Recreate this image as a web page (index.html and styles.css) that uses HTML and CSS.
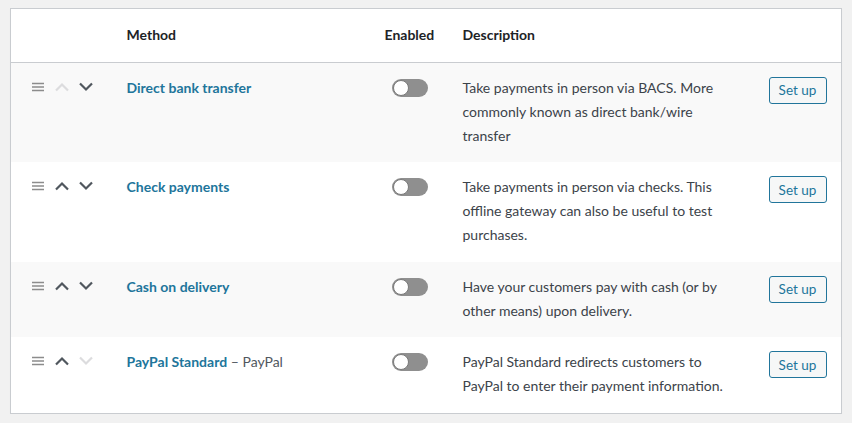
FILE: index.html
```html
<!DOCTYPE html>
<html>
<head>
<meta charset="utf-8">
<link rel="stylesheet" href="styles.css">
</head>
<body>
<div class="wrap">
<table class="methods">
  <colgroup>
    <col class="c-sort"><col class="c-name"><col class="c-en"><col class="c-desc"><col class="c-act">
  </colgroup>
  <thead>
    <tr><th></th><th>Method</th><th>Enabled</th><th>Description</th><th></th></tr>
  </thead>
  <tbody>
    <tr class="alt">
      <td class="sort"><svg class="ham" viewBox="0 0 12 10"><path d="M0 1.5h12M0 5h12M0 8.5h12"/></svg><svg class="chev off" viewBox="0 0 16 10"><path d="M2 8.5 8 2.5l6 6"/></svg><svg class="chev" viewBox="0 0 16 10"><path d="M2 1.5l6 6 6-6"/></svg></td>
      <td><a class="name" href="#">Direct bank transfer</a></td>
      <td><span class="toggle"></span></td>
      <td class="desc">Take payments in person via BACS. More commonly known as direct bank/wire transfer</td>
      <td><button class="setup">Set up</button></td>
    </tr>
    <tr>
      <td class="sort"><svg class="ham" viewBox="0 0 12 10"><path d="M0 1.5h12M0 5h12M0 8.5h12"/></svg><svg class="chev" viewBox="0 0 16 10"><path d="M2 8.5 8 2.5l6 6"/></svg><svg class="chev" viewBox="0 0 16 10"><path d="M2 1.5l6 6 6-6"/></svg></td>
      <td><a class="name" href="#">Check payments</a></td>
      <td><span class="toggle"></span></td>
      <td class="desc">Take payments in person via checks. This offline gateway can also be useful to test purchases.</td>
      <td><button class="setup">Set up</button></td>
    </tr>
    <tr class="alt">
      <td class="sort"><svg class="ham" viewBox="0 0 12 10"><path d="M0 1.5h12M0 5h12M0 8.5h12"/></svg><svg class="chev" viewBox="0 0 16 10"><path d="M2 8.5 8 2.5l6 6"/></svg><svg class="chev" viewBox="0 0 16 10"><path d="M2 1.5l6 6 6-6"/></svg></td>
      <td><a class="name" href="#">Cash on delivery</a></td>
      <td><span class="toggle"></span></td>
      <td class="desc">Have your customers pay with cash (or by other means) upon delivery.</td>
      <td><button class="setup">Set up</button></td>
    </tr>
    <tr>
      <td class="sort"><svg class="ham" viewBox="0 0 12 10"><path d="M0 1.5h12M0 5h12M0 8.5h12"/></svg><svg class="chev" viewBox="0 0 16 10"><path d="M2 8.5 8 2.5l6 6"/></svg><svg class="chev off" viewBox="0 0 16 10"><path d="M2 1.5l6 6 6-6"/></svg></td>
      <td><a class="name" href="#">PayPal Standard</a><span class="sub"> – PayPal</span></td>
      <td><span class="toggle"></span></td>
      <td class="desc">PayPal Standard redirects customers to PayPal to enter their payment information.</td>
      <td><button class="setup">Set up</button></td>
    </tr>
  </tbody>
</table>
</div>
</body>
</html>
```
FILE: styles.css
```css
html, body {
  margin: 0;
  padding: 0;
  background: #f1f1f1;
}
body {
  font-family: Lato, "Open Sans", sans-serif;
  font-size: 14px;
  color: #3c434a;
}
.wrap {
  padding: 8px 10px 0 10px;
}
.methods {
  width: 832px;
  border-collapse: collapse;
  table-layout: fixed;
  background: #fff;
  border: 1px solid #c9ccd0;
  box-shadow: 0 1px 1px rgba(0,0,0,0.04);
}
.c-sort { width: 101px; }
.c-name { width: 258px; }
.c-en { width: 78px; }
.c-desc { width: 306px; }
.c-act { width: 88px; }
th {
  text-align: left;
  font-weight: 700;
  color: #1d2327;
  padding: 14px 15px 15px 15px;
  line-height: 23.5px;
  border-bottom: 1px solid #c9ccd0;
}
td {
  vertical-align: top;
  padding: 13px 15px 14.5px 15px;
  line-height: 24px;
}
tr.alt td { background: #f9f9f9; }
td.sort {
  padding-left: 21px;
  padding-right: 0;
  white-space: nowrap;
}
.ham {
  width: 12px;
  height: 10px;
  vertical-align: middle;
  margin-right: 10px;
  position: relative;
  top: -2px;
}
.ham path {
  fill: none;
  stroke: #8c8c8c;
  stroke-width: 1.6;
}
.chev {
  width: 16px;
  height: 10px;
  vertical-align: middle;
  margin-right: 8px;
  position: relative;
  top: -2px;
}
.chev path {
  fill: none;
  stroke: #50575e;
  stroke-width: 2.2;
}
.chev.off path { stroke: #dcdcde; }
.name {
  color: #21759b;
  font-weight: 700;
  text-decoration: none;
}
.sub { color: #50575e; }
.toggle {
  display: block;
  width: 36px;
  height: 18px;
  border-radius: 9px;
  background: #8f8f8f;
  margin: 3px 0 0 7px;
  position: relative;
}
.toggle::before {
  content: "";
  position: absolute;
  left: 1px;
  top: 1px;
  width: 16px;
  height: 16px;
  border-radius: 50%;
  background: #fff;
  box-sizing: border-box;
  border: 1px solid #7a7a7a;
}
.desc { color: #3c434a; }
.setup {
  font-family: Lato, "Open Sans", sans-serif;
  font-size: 13.5px;
  color: #21759b;
  background: #f6f7f7;
  border: 1px solid #21759b;
  border-radius: 3px;
  height: 27px;
  width: 58px;
  padding: 0;
  margin-top: 1px;
  cursor: pointer;
}
```
